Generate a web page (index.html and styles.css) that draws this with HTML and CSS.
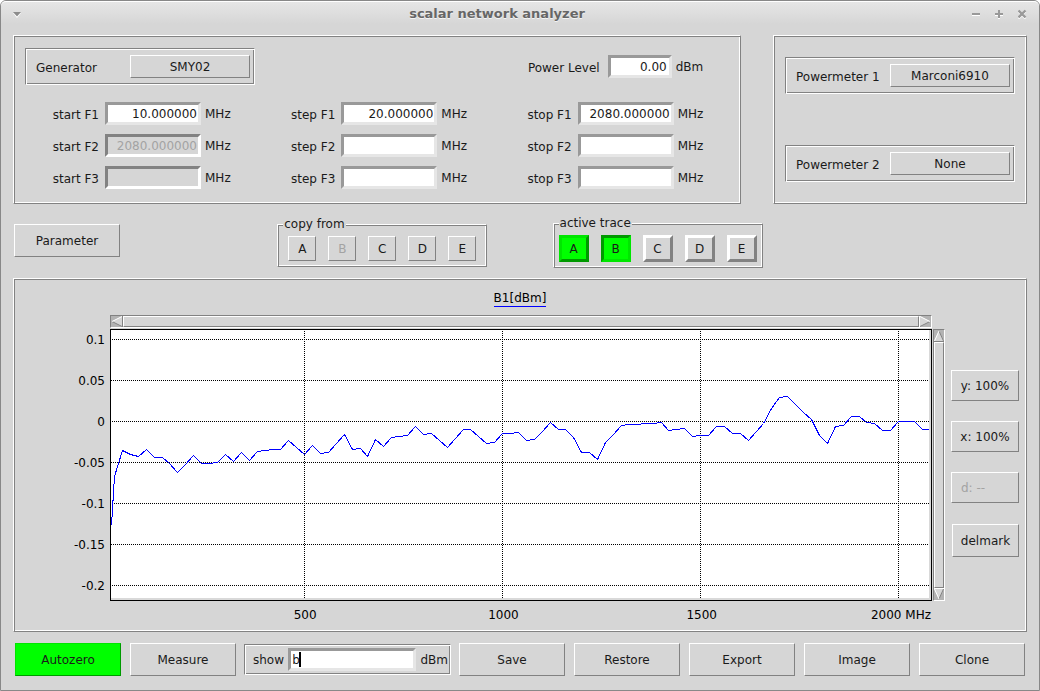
FILE: index.html
```html
<!DOCTYPE html>
<html lang="en">
<head>
<meta charset="utf-8">
<title>scalar network analyzer</title>
<link rel="stylesheet" href="styles.css">
</head>
<body>
<div class="window">
  <header class="titlebar">
    <button class="tb-btn" aria-label="Window menu"><svg width="10" height="8" viewBox="0 0 10 8"><path d="M1 3h8l-4 5z" fill="#fff"/><path d="M1 2h8l-4 4.500z" fill="#8c8c8c"/></svg></button>
    <h1 class="title">scalar network analyzer</h1>
    <div class="tb-actions">
      <button class="tb-btn" aria-label="Minimize"><svg width="9" height="10" viewBox="0 0 9 10"><path d="M0 6h8v1H0z" fill="#fff"/><path d="M0 4h8v2H0z" fill="#999"/></svg></button>
      <button class="tb-btn" aria-label="Maximize"><svg width="9" height="10" viewBox="0 0 9 10"><path d="M0 5h3v3h2V5h3v2H5v3H3V7H0z" fill="#fff"/><path d="M3 1h2v3h3v2H5v3H3V6H0V4h3z" fill="#999"/></svg></button>
      <button class="tb-btn" aria-label="Close"><svg width="9" height="10" viewBox="0 0 9 10"><path d="M.5 2.500l7 7M7.500 2.500l-7 7" stroke="#fff" stroke-width="2.200"/><path d="M.5 1.500l7 7M7.500 1.500l-7 7" stroke="#999" stroke-width="2.400"/></svg></button>
    </div>
  </header>
  <main class="content">
    <div class="top">
      <section class="ridge sweep">
        <div class="groove device">
          <label for="gen">Generator</label>
          <button class="btn device-btn" id="gen">SMY02</button>
        </div>
        <div class="field power">
          <label for="pl">Power Level</label><input class="entry" id="pl" value="0.00"><span>dBm</span>
        </div>
        <div class="field"><label for="a1">start F1</label><input class="entry" id="a1" value="10.000000"><span>MHz</span></div>
        <div class="field"><label for="e1">step F1</label><input class="entry" id="e1" value="20.000000"><span>MHz</span></div>
        <div class="field"><label for="o1">stop F1</label><input class="entry" id="o1" value="2080.000000"><span>MHz</span></div>
        <div class="field"><label for="a2">start F2</label><input class="entry" id="a2" value="2080.000000" disabled><span>MHz</span></div>
        <div class="field"><label for="e2">step F2</label><input class="entry" id="e2"><span>MHz</span></div>
        <div class="field"><label for="o2">stop F2</label><input class="entry" id="o2"><span>MHz</span></div>
        <div class="field"><label for="a3">start F3</label><input class="entry" id="a3" disabled><span>MHz</span></div>
        <div class="field"><label for="e3">step F3</label><input class="entry" id="e3"><span>MHz</span></div>
        <div class="field"><label for="o3">stop F3</label><input class="entry" id="o3"><span>MHz</span></div>
      </section>
      <section class="ridge meters">
        <div class="groove device"><label for="pm1">Powermeter 1</label><button class="btn device-btn" id="pm1">Marconi6910</button></div>
        <div class="groove device"><label for="pm2">Powermeter 2</label><button class="btn device-btn" id="pm2">None</button></div>
      </section>
    </div>
    <div class="traces">
      <button class="btn big">Parameter</button>
      <fieldset class="ridge group copy">
        <legend>copy from</legend>
        <div class="letters">
          <button class="btn">A</button><button class="btn" disabled>B</button><button class="btn">C</button><button class="btn">D</button><button class="btn">E</button>
        </div>
      </fieldset>
      <fieldset class="ridge group active">
        <legend>active trace</legend>
        <div class="letters thick">
          <button class="btn on">A</button><button class="btn on pressed">B</button><button class="btn">C</button><button class="btn">D</button><button class="btn">E</button>
        </div>
      </fieldset>
    </div>
    <section class="ridge chart">
      <h2 class="chart-title"><span>B1[dBm]</span></h2>
      <div class="scroll hscroll">
        <svg class="arrow" viewBox="0 0 12 11"><path d="M11 0L1 5.500L11 11z" fill="#d6d6d6"/><path d="M11 10.500L1 5.500M11.500 0v11" stroke="#828282" fill="none"/><path d="M1 5.500L11 .5" stroke="#fff"/></svg>
        <div class="thumb"></div>
        <svg class="arrow" viewBox="0 0 12 11"><path d="M1 0L11 5.500L1 11z" fill="#d6d6d6"/><path d="M1 10.500L11 5.500" stroke="#828282"/><path d="M.5 11V0M1 .5L11 5.500" stroke="#fff" fill="none"/></svg>
      </div>
      <div class="ylabels"><span>0.1</span><span>0.05</span><span>0</span><span>-0.05</span><span>-0.1</span><span>-0.15</span><span>-0.2</span></div>
      <div class="plot">
        <svg class="plot-svg" viewBox="111 330 818 268" preserveAspectRatio="none" role="img" aria-label="B1 in dBm over frequency">
          <path class="grid-lines" d="M112 339.500H929M111 380.500H929M112 421.500H929M111 462.500H929M112 503.500H929M111 544.500H929M112 585.500H929M304.500 331V598M502.500 331V598M700.500 331V598M898.500 331V598"/>
          <polyline class="trace" id="trace"/>
        </svg>
      </div>
      <div class="scroll vscroll">
        <svg class="arrow" viewBox="0 0 10 12"><path d="M0 11L5 1L10 11z" fill="#d6d6d6"/><path d="M9.500 11L5 1M0 11.500h10" stroke="#828282" fill="none"/><path d="M.5 11L5 1" stroke="#fff"/></svg>
        <div class="thumb"></div>
        <svg class="arrow" viewBox="0 0 10 12"><path d="M0 1L5 11L10 1z" fill="#d6d6d6"/><path d="M9.500 1L5 11" stroke="#828282"/><path d="M0 .5h10M.5 1L5 11" stroke="#fff" fill="none"/></svg>
      </div>
      <div class="xlabels"><span>500</span><span>1000</span><span>1500</span><span class="last">2000 MHz</span></div>
      <div class="side">
        <button class="btn">y: 100%</button><button class="btn">x: 100%</button><button class="btn left" disabled>d: --</button><button class="btn">delmark</button>
      </div>
    </section>
    <footer class="actions">
      <button class="btn big on">Autozero</button>
      <button class="btn big">Measure</button>
      <div class="groove show">
        <label for="show">show</label>
        <span class="show-box"><input class="entry" id="show" value="b"><i class="caret"></i></span>
        <span>dBm</span>
      </div>
      <button class="btn big">Save</button>
      <button class="btn big">Restore</button>
      <button class="btn big">Export</button>
      <button class="btn big">Image</button>
      <button class="btn big">Clone</button>
    </footer>
  </main>
</div>
<script src="app.js"></script>
</body>
</html>
```
FILE: styles.css
```css
* { box-sizing: border-box; }

body {
  margin: 0;
  background: #fff;
  color: #1a1a1a;
  font-family: "DejaVu Sans", sans-serif;
  font-size: 12px;
  line-height: 16px;
}

button, input { font: inherit; color: inherit; }

.window {
  min-height: 100vh;
  display: flex;
  flex-direction: column;
  background: #d6d6d6;
  border: 1px solid #888;
  border-radius: 6px 6px 0 0;
}

.titlebar {
  height: 34px;
  padding: 0 12px 10px 11px;
  display: grid;
  grid-template-columns: auto 1fr auto;
  align-items: center;
  background: linear-gradient(#e6e6e6, #d6d6d6 22px);
  border-top: 1px solid #fff;
  border-radius: 5px 5px 0 0;
}
.title {
  margin: 0;
  font-size: 13px;
  font-weight: bold;
  color: #666;
  text-align: center;
  text-shadow: 0 1px #f4f4f4;
}
.tb-btn {
  display: flex;
  padding: 0;
  border: 0;
  background: none;
}
.tb-actions { display: flex; justify-content: flex-end; gap: 14px; }

.content { flex: 1; display: flex; flex-direction: column; padding: 0 12px 14px; }

.ridge {
  border: 1px solid;
  border-color: #fff #828282 #828282 #fff;
  box-shadow: inset 1px 1px #828282, inset -1px -1px #fff;
}
.groove {
  border: 1px solid;
  border-color: #828282 #fff #fff #828282;
  box-shadow: inset 1px 1px #fff, inset -1px -1px #828282;
}

.btn {
  padding: 0;
  background: #d6d6d6;
  border: 1px solid;
  border-color: #fff #828282 #828282 #fff;
  text-align: center;
}
.btn:disabled { color: #a3a3a3; }
.btn.on { background: #0f0; border-color: #00e600 #009900 #009900 #00e600; }
.btn.pressed { border-color: #009900 #00e600 #00e600 #009900; }
.big { width: 106px; height: 33px; }

.entry {
  width: 96px;
  height: 23px;
  padding: 0 1px;
  background: #fff;
  border: 3px solid;
  border-color: #999 #e6e6e6 #e6e6e6 #999;
  border-radius: 0;
  outline: 0;
  text-align: right;
}
.entry:disabled {
  background: #d6d6d6;
  color: #a3a3a3;
  border-color: #828282 #fff #fff #828282;
}

.top { display: grid; grid-template-columns: 728fr 254fr; gap: 32px; }
.sweep {
  display: grid;
  grid-template-columns: repeat(3, 1fr);
  align-content: start;
  row-gap: 9px;
  padding: 12px 6px 14px 11px;
}
.device {
  display: flex;
  align-items: center;
  justify-content: space-between;
  height: 37px;
  padding: 0 4px 0 10px;
}
.device label { padding-top: 2px; }
.sweep .device { width: 230px; margin-bottom: 8px; }
.device-btn { width: 120px; height: 23px; }
.field { display: flex; align-items: center; }
.field label { width: 74px; margin-right: 6px; padding-top: 2px; text-align: right; }
.field span { margin-left: 4px; }
.field.power { grid-column: 3; margin-bottom: 8px; }
.field.power label { width: 102px; margin-right: 8px; }
.power .entry { width: 64px; padding-right: 2px; }
.meters { display: flex; flex-direction: column; justify-content: space-between; padding: 21px 11px; }

.traces {
  display: grid;
  grid-template-columns: 263fr 275fr 474fr;
  align-items: start;
  margin: 12px 0 10px 1px;
}
.traces > .big { margin-top: 8px; }
.group { width: 210px; min-width: 0; margin: 0; padding: 5px 6px 5px 10px; }
.group legend { margin-left: -5px; padding: 0 1px; line-height: 14px; background: #d6d6d6; }
.copy { margin-top: 1px; }
.active { padding: 5px; }
.active legend { margin-left: 0; }
.letters { display: flex; gap: 12px; }
.letters .btn { width: 28px; height: 25px; }
.thick .btn { width: 30px; height: 27px; border-width: 3px; }

.chart {
  display: grid;
  grid-template-columns: 96px 1fr 13px 81px;
  grid-template-rows: 36px 14px 272px 30px;
  color: #000;
}
.chart-title {
  grid-area: 1 / 2;
  margin: 0;
  padding: 11px 2px 0 0;
  font-size: inherit;
  font-weight: normal;
  text-align: center;
}
.chart-title span { display: inline-block; height: 17px; border-bottom: 1px solid #00f; }
.scroll {
  display: flex;
  background: #b3b3b3;
  border: 1px solid;
  border-color: #828282 #fff #fff #828282;
}
.thumb {
  flex: 1;
  background: #d6d6d6;
  border: 1px solid;
  border-color: #fff #828282 #828282 #fff;
}
.hscroll { grid-area: 2 / 2; height: 13px; }
.hscroll .arrow { width: 12px; height: 11px; }
.vscroll { grid-area: 3 / 3; flex-direction: column; margin-left: 1px; }
.vscroll .arrow { width: 10px; height: 12px; }
.ylabels {
  grid-area: 3 / 1;
  display: flex;
  flex-direction: column;
  justify-content: space-between;
  padding: 1px 5px 5px 0;
  line-height: 20px;
  text-align: right;
}
.plot { grid-area: 3 / 2; padding: 0 2px 2px 0; border: 1px solid #000; background: #d9d9d9; }
.plot-svg { display: block; width: 100%; height: 100%; background: #fff; }
.grid-lines { fill: none; stroke: #000; stroke-dasharray: 1 1; shape-rendering: crispEdges; }
.trace { fill: none; stroke: #00f; shape-rendering: crispEdges; }
.xlabels {
  grid-area: 4 / 2;
  display: grid;
  grid-template-columns: 198fr 198fr 198fr 130fr;
  padding: 6px 1px 0 96px;
  text-align: center;
}
.xlabels .last { text-align: right; }
.side {
  grid-area: 3 / 4;
  display: flex;
  flex-direction: column;
  gap: 20px;
  padding: 41px 7px 0 6px;
  color: #1a1a1a;
}
.side .btn { height: 31px; }
.side .left { text-align: left; padding-left: 9px; }
.side .btn:last-child { height: 33px; margin: 1px 0 0 1px; }

.actions { display: flex; gap: 9px; margin: 11px 2px 0 2px; }
.actions .big { flex: 1 1 106px; }
.show {
  display: flex;
  align-items: center;
  justify-content: space-between;
  width: 207px;
  height: 31px;
  margin: 1px -1px;
  padding: 0 2px 0 8px;
}
.show-box { position: relative; display: flex; }
.show .entry { width: 128px; text-align: left; }
.caret { position: absolute; left: 11px; top: 4px; width: 2px; height: 15px; background: #000; }
```
FILE: app.js
```js
// Vertical plot positions of the readings: the first at 10 MHz, then every 20 MHz from 20 MHz.
const first = 525;
const readings = [
  476, 450, 454, 456, 449, 457, 457, 463, 472, 464,
  455, 463, 463, 462, 454, 461, 452, 460, 451, 450,
  449, 449, 440, 447, 454, 445, 453, 452, 443, 434,
  449, 448, 456, 439, 446, 437, 436, 435, 426, 434,
  433, 440, 447, 438, 429, 429, 436, 443, 442, 433,
  433, 432, 440, 439, 431, 422, 429, 429, 437, 452,
  452, 459, 442, 434, 425, 424, 424, 423, 423, 422,
  430, 429, 428, 436, 435, 435, 426, 426, 433, 433,
  440, 431, 423, 408, 397, 396, 404, 412, 419, 435,
  443, 426, 425, 416, 416, 422, 423, 430, 430, 421,
  421, 421, 429, 429
];
const points = ["111.5," + first];
readings.forEach((y, i) => {
  points.push(Math.floor(106.6 + 0.396 * 20 * (i + 1)) + 0.5 + "," + (y + 0.5));
});
document.getElementById("trace").setAttribute("points", points.join(" "));
```
